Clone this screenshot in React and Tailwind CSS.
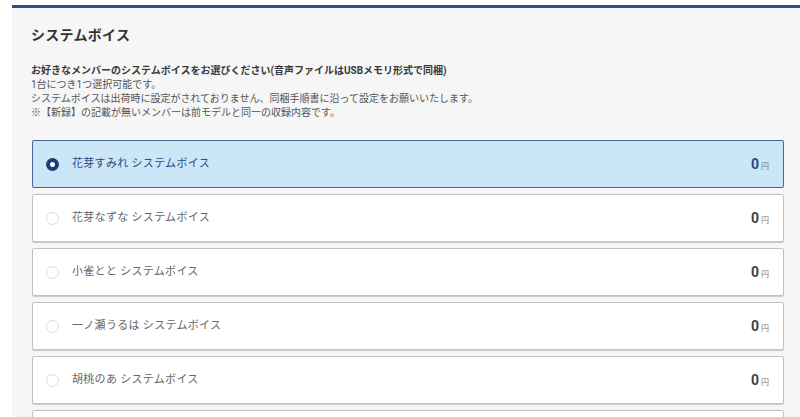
import { useState } from 'react'

const members = [
  '花芽すみれ',
  '花芽なずな',
  '小雀とと',
  '一ノ瀬うるは',
  '胡桃のあ',
  '兎咲ミミ',
]

export default function App() {
  const [selected, setSelected] = useState(0)

  return (
    <div
      className="min-h-screen bg-white pt-[5px] pl-[12px] overflow-hidden"
      style={{ fontFamily: 'Roboto, "Noto Sans CJK JP", sans-serif' }}
    >
      <div className="border-t-[3px] border-[#2b4e8c] bg-[#f6f6f6] pl-[19px] pr-[16px] pt-[19px] pb-10">
        <h2 className="text-[14px] leading-[16px] font-bold text-[#333] tracking-[0.3px]">
          システムボイス
        </h2>

        {/* Description */}
        <div className="mt-[21px] text-[10px] leading-[14px] text-[#555]">
          <p className="font-bold text-[#3a3a3a]">
            お好きなメンバーのシステムボイスをお選びください(音声ファイルはUSBメモリ形式で同梱)
          </p>
          <p>1台につき1つ選択可能です。</p>
          <p>
            システムボイスは出荷時に設定がされておりません、同梱手順書に沿って設定をお願いいたします。
          </p>
          <p>※【新録】の記載が無いメンバーは前モデルと同一の収録内容です。</p>
        </div>

        {/* Options */}
        <div className="mt-[20px] ml-px flex flex-col gap-[6px]">
          {members.map((name, i) => (
            <OptionRow
              key={name}
              label={`${name} システムボイス`}
              active={selected === i}
              onClick={() => setSelected(i)}
            />
          ))}
        </div>
      </div>
    </div>
  )
}

function OptionRow({ label, active, onClick }) {
  return (
    <button
      onClick={onClick}
      className={
        active
          ? 'flex h-[48px] w-full items-center rounded-[2px] border-[1.5px] border-[#4a6598] bg-[#cbe6f7] pl-[13px] pr-[14px] text-left'
          : 'flex h-[48px] w-full items-center rounded-[2px] border border-[#c2c2c2] bg-white pl-[13px] pr-[14px] text-left shadow-[0_1px_1px_rgba(0,0,0,0.18)]'
      }
    >
      {active ? (
        <span className="h-[13px] w-[13px] shrink-0 rounded-full border-[4px] border-[#1f3c78] bg-white" />
      ) : (
        <span className="h-[13px] w-[13px] shrink-0 rounded-full border border-[#dcdcdc] bg-white" />
      )}
      <span
        className={
          active
            ? 'ml-[13px] text-[11px] tracking-[0.3px] text-[#2d4a82]'
            : 'ml-[13px] text-[11px] tracking-[0.3px] text-[#666]'
        }
      >
        {label}
      </span>
      <span className="ml-auto flex items-baseline">
        <span
          className={
            active
              ? 'text-[14px] font-bold text-[#2d4a82]'
              : 'text-[14px] font-bold text-[#444]'
          }
        >
          0
        </span>
        <span className="ml-[2px] text-[8px] text-[#777]">円</span>
      </span>
    </button>
  )
}
